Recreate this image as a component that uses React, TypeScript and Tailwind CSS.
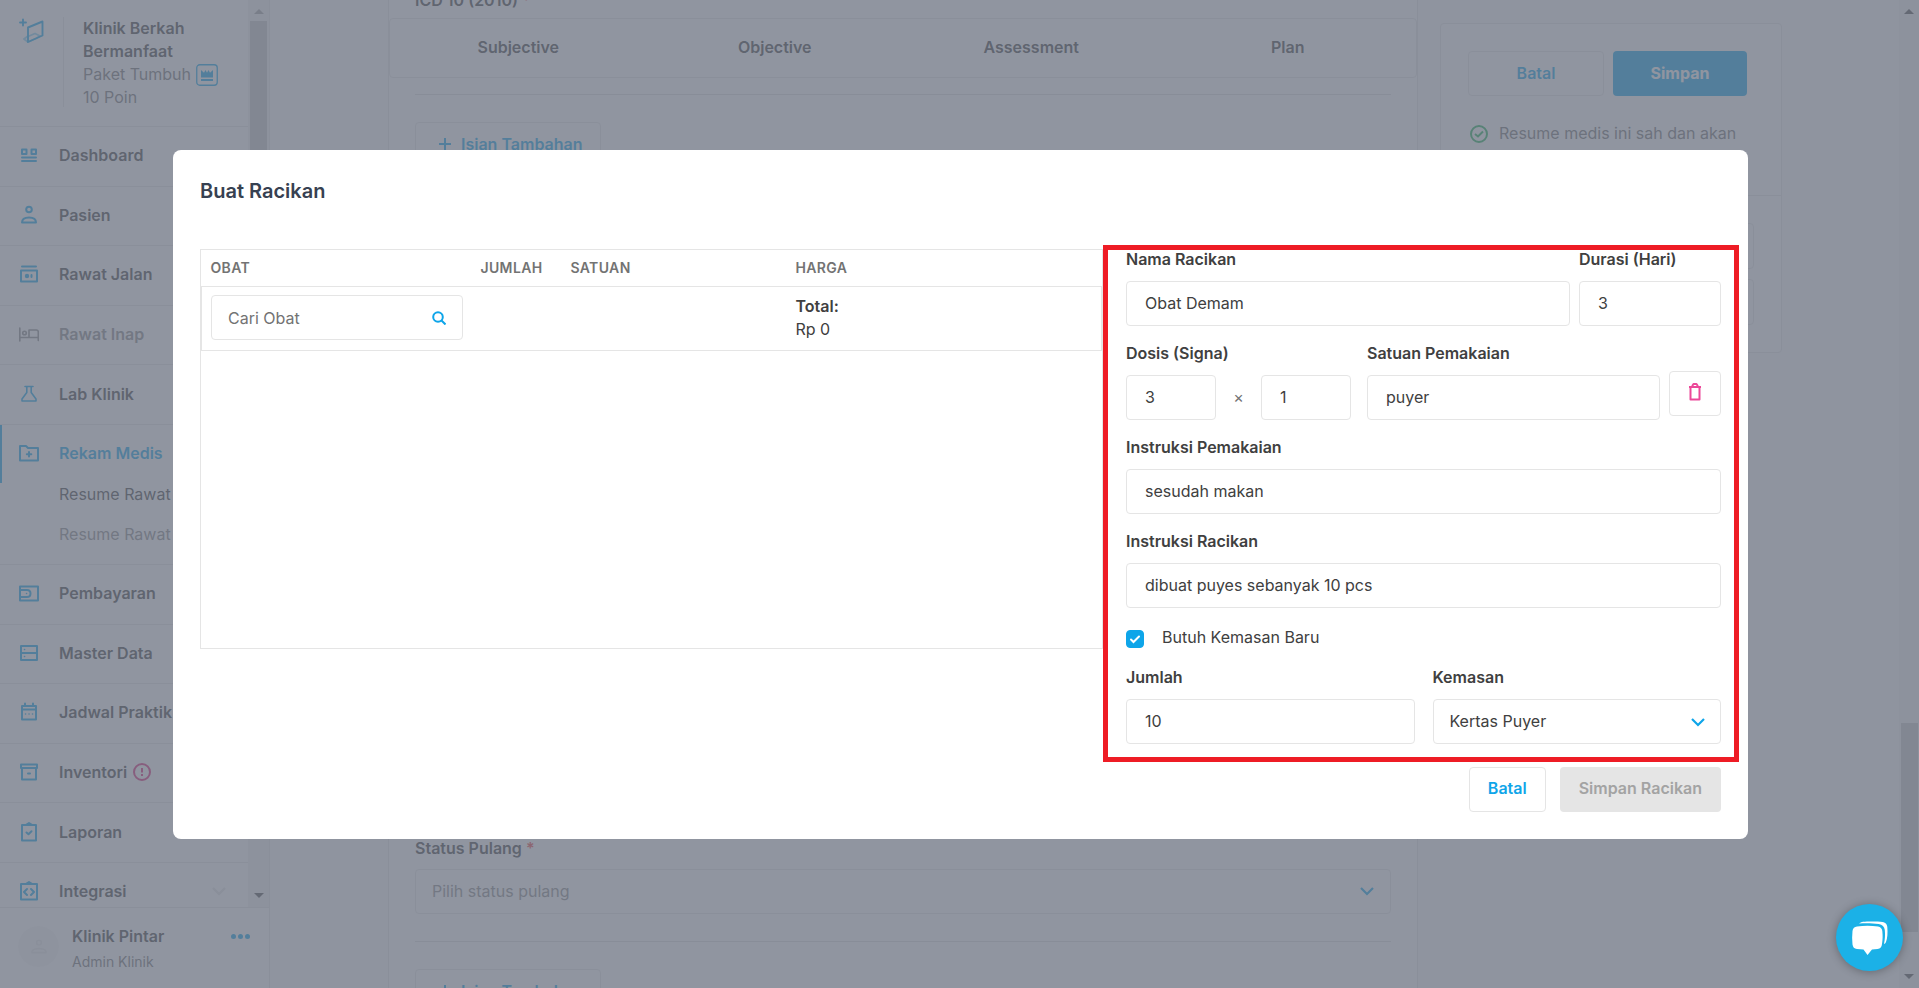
import React from 'react';

interface IconProps {
  children: React.ReactNode;
  size?: string;
}

const Icon = ({ children, size = 'size-5' }: IconProps) => (
  <svg
    viewBox="0 0 20 20"
    fill="none"
    stroke="currentColor"
    strokeWidth="2"
    strokeLinejoin="round"
    strokeLinecap="round"
    aria-hidden="true"
    className={`${size} shrink-0`}
  >
    {children}
  </svg>
);

const icons = {
  dashboard: (
    <Icon>
      <path d="M3 4.500h4.500v4.500H3zM12.500 4.500H17v4.500h-4.500zM3 12.500h14M3 16h14" />
    </Icon>
  ),
  pasien: (
    <Icon>
      <circle cx="10" cy="4.500" r="2.800" />
      <path d="M3 17.500c0-3.500 2.500-5 7-5s7 1.500 7 5z" />
    </Icon>
  ),
  rawatJalan: (
    <Icon>
      <path d="M3 2.500h14M2 6.500h16v11H2z" />
      <circle cx="8" cy="12" r="1.200" fill="currentColor" />
      <path d="M12.500 11v2" />
    </Icon>
  ),
  rawatInap: (
    <Icon>
      <path strokeWidth="1.600" d="M.800 4v13M.800 13.500h18.500v3M19.300 14V8q0-2-2-2H10v7.500" />
      <circle cx="5.500" cy="9" r="1.800" strokeWidth="1.600" />
    </Icon>
  ),
  lab: (
    <Icon>
      <path strokeWidth="1.600" d="M6 2.500h8M7.800 2.500v6L3 15v2h14v-2l-4.800-6.500v-6" />
    </Icon>
  ),
  rekam: (
    <Icon>
      <path d="M1 3h6l2 2h10v12.500H1zM10 9v4.500M7.800 11.300h4.500" />
    </Icon>
  ),
  pembayaran: (
    <Icon>
      <path d="M1 3.500h18v14H1zM1 7h7q3.500 0 3.500 3.500T8 14H1" />
      <path d="M7.500 10.500h.100" strokeWidth="1.500" />
    </Icon>
  ),
  master: (
    <Icon>
      <path d="M2 3h16v14H2zM2 10h16" />
      <path strokeWidth="1.600" d="M5.500 6.500h.100M5.500 13.500h.100" />
    </Icon>
  ),
  jadwal: (
    <Icon>
      <path d="M3 4h14v13.500H3zM3 7.500h14M6 1.500V4M14 1.500V4" />
      <path strokeWidth="1.600" d="M6.500 12h.100M10 12h.100M13.500 12h.100" />
    </Icon>
  ),
  inventori: (
    <Icon>
      <path d="M2 2.500h16v3.500H2zM3 6v11.500h14V6M9 11.500h2" />
    </Icon>
  ),
  laporan: (
    <Icon>
      <path d="M3 3h14v15.500H3zM7.500 2.500L10 1l2.500 1.500M7.500 10.500l2 1.800 3-3" />
    </Icon>
  ),
  integrasi: (
    <Icon>
      <path d="M2 3h16v15.500H2zM7.500 2.500L10 1l2.500 1.500M8 8l-3 3 3 3M12 8l3 3-3 3" />
    </Icon>
  ),
};

const Chevron = ({ className = '' }: { className?: string }) => (
  <svg viewBox="0 0 14 9" fill="none" stroke="currentColor" strokeWidth="2.200" aria-hidden="true" className={`h-[9px] w-[14px] ${className}`}>
    <path d="M1 1l6 6 6-6" />
  </svg>
);

interface NavItemProps {
  icon: React.ReactNode;
  label: string;
  muted?: boolean;
  children?: React.ReactNode;
}

const NavItem = ({ icon, label, muted, children }: NavItemProps) => (
  <li className="flex flex-1 border-b border-[#e5e5e5]">
    <a href="#" className={`flex flex-1 items-center gap-5 pb-0.5 pl-[19px] pr-6 font-semibold ${muted ? 'text-[#8a8a8a]' : ''}`}>
      <span className={muted ? '' : 'text-[#0ea5e9]'}>{icon}</span>
      <span className="flex items-center gap-[6px] whitespace-nowrap">{label}{children}</span>
    </a>
  </li>
);

const Arrow = ({ up }: { up?: boolean }) => (
  <svg viewBox="0 0 10 5" aria-hidden="true" className="h-[5px] w-[10px]">
    <path d={up ? 'M0 5l5-5 5 5z' : 'M0 0l5 5 5-5z'} fill="currentColor" />
  </svg>
);

const Sidebar = () => (
  <aside className="flex h-full w-[270px] shrink-0 flex-col border-r border-[#e5e5e5] bg-white">
    <div className="flex min-h-0 flex-1">
      <div className="min-w-0 flex-1 overflow-hidden">
        <div className="flex h-[127px] border-b border-[#e5e5e5] pt-[17px]">
          <svg viewBox="0 0 26 26" fill="none" stroke="#0ea5e9" strokeWidth="1.900" strokeLinejoin="round" strokeLinecap="round" aria-hidden="true" className="ml-[19px] size-[26px]">
            <path d="M4 2.500v6M1 5.500h6" />
            <path d="M9 10.500l14.500-6v14L9 25z" />
            <path opacity=".5" d="M9 19l-4 3 4 3 8-3.500 4-2.500-5-2.500-7 3" />
          </svg>
          <div className="ml-[18px] h-[90px] border-l border-[#e5e5e5] pl-[19px] leading-[23px]">
            <p className="w-[130px] font-semibold">Klinik Berkah Bermanfaat</p>
            <p className="flex h-[23px] items-center gap-[5px] whitespace-nowrap text-[#737373]">
              Paket Tumbuh
              <svg viewBox="0 0 22 22" aria-hidden="true" className="size-[22px]" fill="#0ea5e9">
                <rect x=".750" y=".750" width="20.500" height="20.500" rx="3" fill="none" stroke="#0ea5e9" strokeWidth="1.300" />
                <path d="M5 6l3 2.800L9.500 6 11 8.800 12.500 6 14 8.800 17 6v7.500H5zM5 15h12v2H5z" />
              </svg>
            </p>
            <p className="text-[#737373]">10 Poin</p>
          </div>
        </div>
        <nav>
          <ul>
            <li>
              <ul className="flex h-[298px] flex-col">
                <NavItem icon={icons.dashboard} label="Dashboard" />
                <NavItem icon={icons.pasien} label="Pasien" />
                <NavItem icon={icons.rawatJalan} label="Rawat Jalan" />
                <NavItem icon={icons.rawatInap} label="Rawat Inap" muted />
                <NavItem icon={icons.lab} label="Lab Klinik" />
              </ul>
            </li>
            <li className="border-b border-[#e5e5e5] pb-[18px]">
              <a href="#" className="flex h-[58px] items-center gap-5 border-l-2 border-[#0ea5e9] pb-0.5 pl-[17px] font-semibold text-[#0ea5e9]">
                {icons.rekam}
                Rekam Medis
              </a>
              <ul className="flex flex-col gap-[17px] whitespace-nowrap pl-[59px]">
                <li><a href="#" className="block leading-[23px]">Resume Rawat Jalan</a></li>
                <li><a href="#" className="block leading-[23px] text-[#8a8a8a]">Resume Rawat Inap</a></li>
              </ul>
            </li>
            <li>
              <ul className="flex h-[298px] flex-col">
                <NavItem icon={icons.pembayaran} label="Pembayaran" />
                <NavItem icon={icons.master} label="Master Data" />
                <NavItem icon={icons.jadwal} label="Jadwal Praktik" />
                <NavItem icon={icons.inventori} label="Inventori">
                  <svg viewBox="0 0 18 18" fill="none" stroke="#db2777" strokeWidth="2" aria-hidden="true" className="size-[18px]">
                    <circle cx="9" cy="9" r="8" />
                    <path d="M9 5v4.500M9 11v2" />
                  </svg>
                </NavItem>
                <NavItem icon={icons.laporan} label="Laporan" />
              </ul>
            </li>
            <li>
              <a href="#" className="flex h-[58px] items-center gap-5 pb-0.5 pl-[19px] pr-[22px] font-semibold">
                <span className="text-[#0ea5e9]">{icons.integrasi}</span>
                <span className="flex-1">Integrasi</span>
                <Chevron className="text-[#e5e5e5]" />
              </a>
            </li>
          </ul>
        </nav>
      </div>
      <div className="flex w-[21px] flex-col items-center justify-between bg-[#f4f4f4] pb-[9px] pt-[9px] text-[#a3a3a3]">
        <Arrow up />
        <div className="mb-auto mt-[7px] h-[640px] w-[17px] bg-[#c8c8c8]" />
        <span className="text-[#505050]"><Arrow /></span>
      </div>
    </div>
    <div className="flex h-[81px] shrink-0 gap-[13px] border-t border-[#e5e5e5] pl-[18px] pr-[19px] pt-[17px]">
      <span className="mt-px flex size-[41px] items-center justify-center rounded-full bg-[#f8f8f8] text-[#e8e8e8]">
        <Icon size="size-4">
          <circle cx="10" cy="4.500" r="3" />
          <path d="M1 17c0-3.500 2.500-5 9-5s9 1.500 9 5z" />
        </Icon>
      </span>
      <div className="flex-1">
        <p className="font-semibold leading-[23px]">Klinik Pintar</p>
        <p className="mt-1 text-sm text-[#737373]">Admin Klinik</p>
      </div>
      <button type="button" aria-label="Menu akun" className="flex h-[23px] items-center gap-[2px] text-[#0ea5e9]">
        <span className="size-[5px] rounded-full bg-current" />
        <span className="size-[5px] rounded-full bg-current" />
        <span className="size-[5px] rounded-full bg-current" />
      </button>
    </div>
  </aside>
);

const AddButton = () => (
  <button type="button" className="flex h-[45px] w-[186px] items-center gap-[10px] whitespace-nowrap rounded border border-[#e5e5e5] pb-0.5 pl-[23px] font-semibold text-[#0ea5e9]">
    <svg viewBox="0 0 12 12" stroke="currentColor" strokeWidth="2" aria-hidden="true" className="size-3">
      <path d="M6 0v12M0 6h12" />
    </svg>
    Isian Tambahan
  </button>
);

const ResumeForm = () => (
  <section className="h-full min-w-0 flex-1 overflow-hidden border-x border-[#e5e5e5] bg-white">
    <h3 className="-mt-[11px] px-[26px] font-semibold leading-[23px]">
      ICD 10 (2010) <span className="text-[#ef4444]">*</span>
    </h3>
    <div className="mt-[6px] grid h-[60px] grid-cols-4 items-center rounded border border-[#e5e5e5] pb-0.5 text-center font-semibold">
      <span>Subjective</span>
      <span>Objective</span>
      <span>Assessment</span>
      <span>Plan</span>
    </div>
    <div className="px-[26px]">
      <hr className="mb-[27px] mt-4 border-[#e0e0e0]" />
      <AddButton />
      <div className="h-[670px]" />
      <label htmlFor="status-pulang" className="block font-semibold leading-[23px]">
        Status Pulang <span className="text-[#ef4444]">*</span>
      </label>
      <div className="relative mt-[9px]">
        <select id="status-pulang" className="h-[45px] w-full appearance-none rounded border border-[#e5e5e5] px-4 pb-0.5 text-[#8c8c8c]">
          <option>Pilih status pulang</option>
        </select>
        <Chevron className="pointer-events-none absolute right-[17px] top-[18px] text-[#0ea5e9]" />
      </div>
      <hr className="my-[27px] border-[#e0e0e0]" />
      <AddButton />
    </div>
  </section>
);

const SummaryCard = () => (
  <aside className="mt-[23px] w-[342px] shrink-0 self-start rounded border border-[#e5e5e5] bg-white">
    <div className="h-[172px] border-b border-[#e5e5e5] px-[27px] pt-[27px]">
      <div className="mr-[7px] flex gap-[9px]">
        <button type="button" className="h-[45px] flex-1 rounded border border-[#e5e5e5] pb-0.5 font-semibold text-[#0ea5e9]">Batal</button>
        <button type="button" className="h-[45px] flex-1 rounded bg-[#0ea5e9] pb-0.5 font-bold text-white">Simpan</button>
      </div>
      <p className="mt-[26px] flex items-center gap-[11px] whitespace-nowrap pl-[2px] leading-[23px] text-[#737373]">
        <svg viewBox="0 0 18 18" fill="none" stroke="#22b35a" strokeWidth="2" aria-hidden="true" className="size-[18px]">
          <circle cx="9" cy="9" r="8" />
          <path d="M5 9l3 2.500 5-5" />
        </svg>
        Resume medis ini sah dan akan
      </p>
    </div>
    <div className="flex flex-col gap-[10px] p-[27px]">
      <div className="h-[46px] rounded border border-[#e5e5e5]" />
      <div className="h-[46px] rounded border border-[#e5e5e5]" />
    </div>
  </aside>
);

const inputClass = 'h-[45px] w-full rounded border border-[#e5e5e5] bg-white px-[18px] outline-none';

interface FieldProps {
  id: string;
  label: string;
  value: string;
  className?: string;
}

const Field = ({ id, label, value, className = '' }: FieldProps) => (
  <div className={className}>
    <label htmlFor={id} className="mb-[10px] block whitespace-nowrap font-semibold leading-[23px]">{label}</label>
    <input id={id} type="text" defaultValue={value} className={inputClass} />
  </div>
);

const ObatTable = () => (
  <div className="mt-px h-[400px] flex-1 border border-[#e5e5e5]">
    <table className="w-full table-fixed border-collapse text-left">
      <thead>
        <tr className="h-[37px] text-sm tracking-wide text-[#737373]">
          <th className="w-[30%] px-[9px] font-semibold">OBAT</th>
          <th className="w-[10%] px-[9px] font-semibold">JUMLAH</th>
          <th className="w-1/4 px-[9px] font-semibold">SATUAN</th>
          <th className="w-[35%] px-[9px] font-semibold">HARGA</th>
        </tr>
      </thead>
      <tbody>
        <tr className="h-16 border border-[#e5e5e5]">
          <td className="px-[9px] pb-0.5">
            <div className="relative">
              <input type="search" aria-label="Cari Obat" placeholder="Cari Obat" className="h-[45px] w-full rounded border border-[#e5e5e5] px-4 outline-none placeholder:text-[#737373]" />
              <svg viewBox="0 0 14 14" fill="none" stroke="#0ea5e9" strokeWidth="2" aria-hidden="true" className="absolute right-[17px] top-4 size-[14px]">
                <circle cx="6" cy="6" r="4.800" />
                <path d="M9.500 9.500l4 4" />
              </svg>
            </div>
          </td>
          <td />
          <td />
          <td className="px-[9px] pb-0.5 leading-[23px]">
            <p className="font-semibold">Total:</p>
            <p>Rp 0</p>
          </td>
        </tr>
      </tbody>
    </table>
  </div>
);

const RacikanForm = () => (
  <div className="relative w-[595px] shrink-0">
    <div className="flex flex-col gap-4">
      <div className="flex gap-[9px]">
        <Field id="nama" label="Nama Racikan" value="Obat Demam" className="flex-1" />
        <Field id="durasi" label="Durasi (Hari)" value="3" className="w-[142px]" />
      </div>
      <div className="flex items-end">
        <Field id="dosis" label="Dosis (Signa)" value="3" className="w-[90px]" />
        <span className="w-[45px] text-center leading-[45px] text-[#737373]">×</span>
        <input aria-label="Jumlah per dosis" type="text" defaultValue="1" className="h-[45px] w-[90px] rounded border border-[#e5e5e5] px-[18px] outline-none" />
        <Field id="satuan" label="Satuan Pemakaian" value="puyer" className="ml-4 mr-[9px] flex-1" />
        <button type="button" aria-label="Hapus dosis" className="mb-1 flex h-[45px] w-[52px] items-center justify-center rounded border border-[#e5e5e5] pb-0.5 text-[#ec4899]">
          <svg viewBox="0 0 16 18" fill="none" stroke="currentColor" strokeWidth="2" strokeLinejoin="round" aria-hidden="true" className="h-[18px] w-4">
            <path d="M2 4h12M5.500 4V2.500L6.500 1h3l1 1.500V4M3.500 4v12.500h9V4" />
          </svg>
        </button>
      </div>
      <Field id="instruksi-pemakaian" label="Instruksi Pemakaian" value="sesudah makan" />
      <Field id="instruksi-racikan" label="Instruksi Racikan" value="dibuat puyes sebanyak 10 pcs" />
    </div>
    <div className="relative mb-[17px] mt-[18px] flex gap-[18px] leading-[23px]">
      <input id="kemasan-baru" type="checkbox" defaultChecked className="mt-1 size-[18px] appearance-none rounded border border-[#d4d4d4] checked:border-[#0ea5e9] checked:bg-[#0ea5e9]" />
      <svg viewBox="0 0 18 18" fill="none" stroke="white" strokeWidth="2" strokeLinecap="round" aria-hidden="true" className="pointer-events-none absolute left-0 top-1 size-[18px]">
        <path d="M5 9.500l2.500 2.500L13 6.500" />
      </svg>
      <label htmlFor="kemasan-baru">Butuh Kemasan Baru</label>
    </div>
    <div className="grid grid-cols-2 gap-[18px]">
      <Field id="jumlah" label="Jumlah" value="10" />
      <div>
        <label htmlFor="kemasan" className="mb-[10px] block font-semibold leading-[23px]">Kemasan</label>
        <div className="relative">
          <select id="kemasan" className="h-[45px] w-full appearance-none rounded border border-[#e5e5e5] px-4 outline-none">
            <option>Kertas Puyer</option>
          </select>
          <Chevron className="pointer-events-none absolute right-4 top-[19px] text-[#0ea5e9]" />
        </div>
      </div>
    </div>
    <div className="pointer-events-none absolute -bottom-[18px] -left-[23px] -right-[18px] -top-[3px] border-[5px] border-[#ee1c25]" />
  </div>
);

const RacikanModal = () => (
  <div className="fixed inset-0 flex items-center justify-center bg-[#6b7280]/75 pl-0.5">
    <div role="dialog" aria-modal="true" aria-labelledby="modal-title" className="w-full max-w-[1575px] rounded-lg bg-white p-[27px]">
      <h2 id="modal-title" className="mb-[43px] text-xl font-semibold leading-[28px] text-[#374151]">Buat Racikan</h2>
      <div className="flex items-start gap-[23px]">
        <ObatTable />
        <RacikanForm />
      </div>
      <div className="mt-[23px] flex justify-end gap-[14px]">
        <button type="button" className="h-[45px] rounded border border-[#e5e5e5] px-[18px] pb-0.5 font-semibold text-[#0ea5e9]">Batal</button>
        <button type="button" disabled className="h-[45px] rounded bg-[#e5e5e5] px-[19px] pb-0.5 font-semibold text-[#a3a3a3]">Simpan Racikan</button>
      </div>
    </div>
  </div>
);

export default function App() {
  return (
    <div className="flex h-screen overflow-hidden bg-[#f9fafb] font-['Inter',sans-serif] text-base text-[#404040]">
      <Sidebar />
      <main className="flex min-w-0 flex-1 gap-[22px] pl-[118px] pr-[117px]">
        <ResumeForm />
        <SummaryCard />
      </main>
      <div className="flex w-5 shrink-0 flex-col items-center justify-between bg-[#f3f3f3] py-[9px] text-[#505050]">
        <Arrow up />
        <div className="mb-[42px] mt-auto h-[209px] w-[17px] bg-[#c8c8c8]" />
        <Arrow />
      </div>
      <RacikanModal />
      <button type="button" aria-label="Buka obrolan" className="fixed bottom-[17px] right-4 flex size-[67px] items-center justify-center rounded-full bg-[#1bb1e7] shadow-[0_1px_10px_rgba(0,0,0,0.3)]">
        <svg viewBox="0 0 36 34" fill="white" aria-hidden="true" className="h-[34px] w-9">
          <path d="M5 5.500C12 4.600 19 4.600 26 5.500c2.500.400 4 1.800 4.300 4.500.500 5 .500 8-.300 13-.300 3-1.500 4.700-4.500 5l-5.500.400L15.500 34l-4-5.600L5 28c-3-.300-4-1.800-4.500-4.500C0 19 0 14.500.500 10 .800 7.300 2.500 5.800 5 5.500z" />
          <path d="M7 2.500C9 .800 12 .500 20 .500c4 0 8 0 10.500.500 3.500.600 4.500 2.500 4.800 5 .500 6 .200 11-1.300 15-.400 1.200-1.500 2-2 2 1-5 1.300-9 .800-14-.400-3.500-2.500-5.500-6-6-6-.700-12-.900-19.800-.500z" />
        </svg>
      </button>
    </div>
  );
}
